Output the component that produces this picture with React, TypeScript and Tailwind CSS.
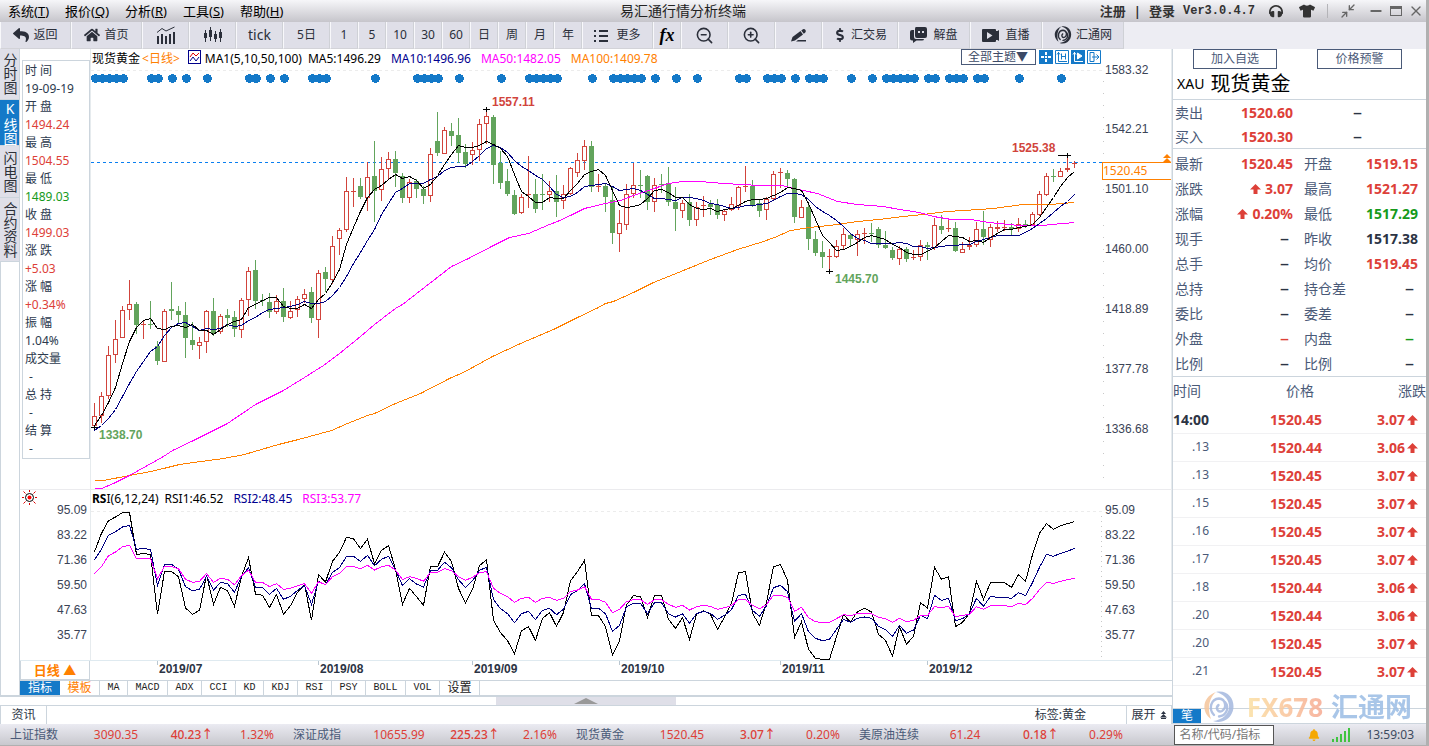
/**
 * Market terminal main window: daily candles with moving averages, the RSI
 * pane under them, and the quote / tick panel on the right.
 */

import type { ReactNode } from "react";
import { clsx } from "clsx";
import {
  FaReply,
  FaHome,
  FaDollarSign,
  FaHeadphones,
  FaTshirt,
  FaBell,
} from "react-icons/fa";
import { ZoomIn, ZoomOut, Minimize2, Minus, X } from "lucide-react";

// [direction, high, body top, body bottom, low]; 1 = rising, 0 = falling.
// Vertical values are pixels below the base line of the price pane.
type Candle = [number, number, number, number, number];

const STEP = 7;
const FIRST_X = 3;
const PRICE_TOP = 20;

const candles: Candle[] = [
  [1, 313, 326, 335, 338], [1, 302, 306, 325, 332], [1, 256, 265, 305, 308], [1, 230, 249, 264, 272],
  [1, 216, 220, 247, 247], [1, 190, 214, 219, 229], [0, 212, 214, 235, 243], [1, 231, 234, 235, 248],
  [0, 211, 234, 235, 238], [0, 251, 256, 271, 274], [1, 219, 221, 271, 271], [0, 192, 219, 221, 229],
  [0, 216, 221, 225, 232], [0, 212, 225, 248, 267], [0, 232, 250, 255, 259], [1, 247, 252, 255, 268],
  [1, 220, 221, 251, 262], [0, 208, 221, 243, 245], [1, 224, 226, 241, 243], [0, 219, 225, 228, 236],
  [0, 221, 227, 239, 246], [1, 208, 210, 239, 247], [1, 177, 181, 209, 225], [0, 170, 180, 211, 218],
  [0, 204, 210, 211, 215], [0, 203, 212, 222, 227], [1, 205, 211, 221, 223], [0, 198, 211, 227, 231],
  [1, 211, 221, 227, 228], [1, 206, 209, 219, 226], [1, 199, 204, 208, 212], [0, 197, 202, 228, 232],
  [1, 180, 183, 229, 247], [0, 177, 182, 189, 201], [1, 146, 156, 189, 193], [1, 138, 140, 148, 164],
  [1, 87, 101, 139, 141], [1, 88, 101, 101, 116], [0, 88, 96, 107, 108], [1, 72, 87, 107, 120],
  [0, 51, 86, 101, 131], [1, 67, 79, 99, 110], [1, 62, 69, 78, 89], [0, 61, 69, 83, 96],
  [0, 83, 86, 108, 112], [1, 89, 92, 107, 112], [0, 89, 91, 99, 107], [0, 96, 99, 106, 113],
  [1, 58, 64, 105, 111], [0, 22, 51, 63, 65], [1, 37, 40, 63, 63], [0, 33, 41, 46, 55],
  [0, 28, 45, 63, 72], [0, 54, 62, 74, 77], [1, 52, 60, 64, 74], [1, 29, 34, 59, 70],
  [1, 19, 26, 33, 53], [0, 25, 27, 75, 93], [0, 61, 73, 93, 98], [0, 79, 91, 104, 105],
  [0, 100, 105, 124, 124], [1, 104, 107, 122, 123], [1, 66, 104, 105, 117], [0, 89, 104, 119, 122],
  [0, 84, 104, 105, 119], [1, 91, 101, 104, 111], [0, 85, 101, 112, 126], [1, 95, 104, 110, 118],
  [1, 77, 78, 103, 104], [1, 63, 70, 82, 86], [1, 50, 56, 70, 79], [0, 51, 56, 97, 101],
  [1, 84, 96, 96, 101], [0, 93, 96, 107, 121], [0, 96, 110, 143, 153], [1, 120, 133, 143, 161],
  [1, 94, 104, 134, 139], [1, 73, 95, 103, 107], [0, 80, 95, 96, 107], [0, 85, 86, 112, 119],
  [1, 88, 95, 111, 121], [0, 84, 94, 95, 102], [0, 77, 93, 112, 115], [0, 97, 112, 119, 140],
  [1, 110, 113, 120, 127], [0, 104, 112, 130, 135], [1, 112, 117, 129, 135], [1, 106, 115, 116, 126],
  [0, 110, 114, 117, 124], [0, 109, 115, 125, 128], [1, 119, 121, 124, 130], [1, 107, 114, 119, 120],
  [1, 96, 97, 115, 119], [1, 76, 96, 97, 101], [0, 90, 96, 115, 116], [0, 109, 113, 121, 126],
  [1, 107, 109, 119, 129], [1, 81, 84, 108, 110], [1, 78, 82, 83, 97], [0, 80, 83, 89, 95],
  [0, 88, 89, 127, 132], [1, 110, 117, 127, 127], [0, 113, 117, 149, 159], [0, 141, 149, 163, 165],
  [0, 151, 162, 167, 177], [1, 159, 166, 167, 181], [1, 150, 156, 166, 167], [1, 138, 144, 155, 158],
  [0, 143, 145, 149, 156], [1, 140, 144, 149, 165], [1, 138, 143, 143, 153], [0, 133, 143, 144, 151],
  [0, 137, 139, 155, 157], [0, 141, 155, 158, 158], [0, 157, 160, 168, 169], [1, 156, 159, 168, 174],
  [0, 157, 159, 169, 171], [1, 160, 167, 168, 169], [1, 150, 155, 166, 170], [0, 152, 155, 157, 169],
  [1, 128, 135, 157, 159], [0, 125, 136, 140, 143], [1, 130, 138, 139, 141], [0, 132, 138, 161, 161],
  [1, 152, 159, 162, 162], [1, 147, 155, 157, 159], [1, 132, 139, 154, 156], [0, 121, 139, 147, 154],
  [1, 134, 137, 149, 156], [1, 131, 137, 139, 141], [1, 130, 137, 138, 140], [0, 133, 137, 139, 144],
  [1, 128, 134, 138, 141], [0, 130, 134, 135, 137], [1, 122, 124, 134, 135], [1, 101, 104, 124, 125],
  [1, 83, 86, 104, 105], [0, 79, 86, 87, 91], [1, 78, 81, 86, 86], [1, 66, 78, 80, 81],
  [1, 71, 73, 74, 77],
];

// Averages need history from before the first bar, so their heads are given.
const ma5Head = [335, 325, 312, 297];
const ma10Head = [340, 335, 328, 319, 306, 293, 281, 271, 261];

const ma50: [number, number][] = [
  [3, 398], [10, 398], [22, 393], [38, 385], [56, 375], [72, 366], [81, 360], [102, 350], [136, 333],
  [164, 314], [192, 300], [213, 287], [232, 275], [248, 263], [269, 246], [283, 234], [304, 218],
  [311, 214], [329, 200], [360, 176], [377, 168], [402, 155], [418, 147], [437, 143], [458, 134],
  [466, 131], [479, 125], [493, 118], [514, 113], [529, 110], [542, 105], [554, 101], [577, 93],
  [591, 91], [608, 91], [633, 93], [668, 95], [691, 95], [702, 98], [712, 100], [726, 103], [746, 111],
  [766, 114], [792, 116], [808, 119], [828, 122], [842, 126], [860, 129], [880, 129], [897, 132],
  [908, 133], [927, 135], [952, 135], [960, 134], [972, 133], [983, 132],
];

const ma100: [number, number][] = [
  [3, 390], [12, 390], [38, 385], [59, 381], [72, 378], [88, 374], [102, 372], [132, 368], [153, 364],
  [187, 354], [207, 349], [240, 340], [256, 333], [276, 325], [283, 323], [304, 313], [329, 303],
  [360, 287], [372, 282], [401, 266], [429, 253], [462, 239], [486, 227], [507, 217], [514, 213],
  [522, 211], [542, 202], [562, 192], [582, 184], [619, 169], [646, 159], [659, 155], [672, 151],
  [683, 147], [699, 140], [718, 137], [738, 135], [746, 134], [766, 131], [787, 129], [812, 126],
  [832, 124], [856, 121], [872, 120], [902, 118], [931, 114], [959, 114], [983, 112],
];

// RSI samples, three units to the pixel.
const rsi1 = [
  215, 160, 122, 111, 98, 97, 223, 221, 223, 403, 274, 275, 290, 384, 403, 391, 285, 373, 322, 332,
  379, 289, 233, 342, 346, 382, 344, 403, 377, 337, 313, 421, 284, 306, 244, 217, 172, 176, 206, 178,
  251, 211, 197, 268, 373, 325, 350, 376, 260, 260, 217, 245, 325, 370, 328, 257, 239, 421, 458, 482,
  521, 452, 440, 481, 415, 398, 439, 398, 302, 275, 241, 407, 407, 440, 526, 482, 374, 347, 350, 412,
  347, 347, 418, 445, 413, 478, 403, 392, 403, 448, 412, 370, 278, 275, 400, 436, 367, 260, 254, 301,
  472, 425, 508, 535, 538, 538, 470, 404, 426, 395, 385, 396, 463, 481, 528, 440, 493, 469, 368, 384,
  262, 298, 290, 440, 427, 400, 304, 358, 308, 307, 308, 322, 284, 304, 224, 160, 131, 148, 137, 131,
  125,
];
const rsi2 = [
  239, 208, 166, 155, 141, 136, 208, 205, 209, 316, 253, 253, 268, 320, 332, 328, 289, 331, 307, 311,
  337, 289, 263, 322, 322, 343, 325, 358, 349, 331, 317, 373, 304, 314, 277, 263, 229, 229, 244, 226,
  257, 238, 229, 269, 317, 296, 312, 321, 271, 271, 247, 263, 299, 323, 302, 271, 262, 359, 386, 401,
  428, 401, 394, 419, 391, 385, 404, 388, 344, 331, 311, 385, 385, 401, 454, 436, 381, 370, 370, 401,
  368, 368, 401, 411, 401, 430, 401, 394, 400, 418, 406, 389, 346, 343, 391, 409, 377, 323, 316, 335,
  424, 401, 455, 475, 482, 478, 448, 418, 427, 415, 411, 415, 439, 449, 469, 436, 460, 450, 406, 416,
  346, 361, 355, 422, 416, 401, 355, 379, 349, 352, 352, 355, 338, 347, 308, 262, 223, 229, 220, 214,
  205,
];
const rsi3 = [
  281, 260, 227, 216, 200, 196, 236, 236, 236, 296, 259, 260, 266, 298, 307, 304, 281, 307, 295, 298,
  314, 287, 271, 307, 307, 320, 311, 328, 325, 317, 311, 340, 305, 314, 290, 280, 259, 260, 266, 256,
  270, 260, 256, 270, 299, 290, 295, 304, 277, 277, 266, 272, 290, 301, 292, 278, 275, 325, 340, 350,
  367, 355, 352, 367, 355, 352, 361, 355, 335, 330, 320, 358, 358, 367, 398, 388, 365, 359, 359, 373,
  359, 359, 373, 382, 376, 390, 380, 376, 379, 388, 383, 377, 359, 359, 376, 386, 374, 346, 346, 352,
  394, 382, 413, 425, 428, 427, 416, 404, 407, 401, 400, 401, 412, 416, 427, 415, 425, 421, 407, 406,
  380, 383, 379, 410, 406, 403, 380, 388, 377, 377, 377, 380, 370, 374, 355, 329, 307, 310, 304, 299,
  295,
];

// Bars that carry a news marker.
const newsBars = [
  0, 1, 2, 3, 4, 8, 9, 11, 13, 16, 22, 23, 25, 27, 31, 32, 33, 40, 46, 47, 48, 49, 52, 58, 62, 63, 64,
  65, 66, 71, 74, 75, 76, 77, 78, 80, 83, 86, 92, 93, 96, 97, 98, 100, 102, 103, 104, 108, 111, 113,
  114, 115, 116, 117, 119, 120, 122, 123, 124, 126, 127, 132, 138,
];

const menus = [
  ["系统", "T"],
  ["报价", "Q"],
  ["分析", "R"],
  ["工具", "S"],
  ["帮助", "H"],
];

const infoRows: [string, string][] = [
  ["时 间", ""],
  ["19-09-19", ""],
  ["开 盘", ""],
  ["1494.24", "text-[#dd4038]"],
  ["最 高", ""],
  ["1504.55", "text-[#dd4038]"],
  ["最 低", ""],
  ["1489.03", "text-[#169a1c]"],
  ["收 盘", ""],
  ["1499.03", "text-[#dd4038]"],
  ["涨 跌", ""],
  ["+5.03", "text-[#dd4038]"],
  ["涨 幅", ""],
  ["+0.34%", "text-[#dd4038]"],
  ["振 幅", ""],
  ["1.04%", ""],
  ["成交量", ""],
  ["-", "pl-1"],
  ["总 持", ""],
  ["-", "pl-1"],
  ["结 算", ""],
  ["-", "pl-1"],
];

const months: [string, string][] = [
  ["2019/07", "w-[161px]"],
  ["2019/08", "w-[154px]"],
  ["2019/09", "w-[147px]"],
  ["2019/10", "w-[161px]"],
  ["2019/11", "w-[147px]"],
  ["2019/12", "w-[147px]"],
];

const indicators: [string, string][] = [
  ["MA", "w-7"],
  ["MACD", "w-10"],
  ["ADX", "w-[34px]"],
  ["CCI", "w-[34px]"],
  ["KD", "w-7"],
  ["KDJ", "w-[34px]"],
  ["RSI", "w-[34px]"],
  ["PSY", "w-[34px]"],
  ["BOLL", "w-10"],
  ["VOL", "w-[34px]"],
  ["设置", "w-10"],
];

const RED = "text-[#dd4038]";
const GREEN = "text-[#169a1c]";

type Cell = [string, string, string];
const quotes: [Cell, Cell][] = [
  [["最新", "1520.45", RED], ["开盘", "1519.15", RED]],
  [["涨跌", "↑3.07", RED], ["最高", "1521.27", RED]],
  [["涨幅", "↑0.20%", RED], ["最低", "1517.29", GREEN]],
  [["现手", "–", ""], ["昨收", "1517.38", ""]],
  [["总手", "–", ""], ["均价", "1519.45", RED]],
  [["总持", "–", ""], ["持仓差", "–", ""]],
  [["委比", "–", ""], ["委差", "–", ""]],
  [["外盘", "–", RED], ["内盘", "–", GREEN]],
  [["比例", "–", ""], ["比例", "–", ""]],
];

const ticks: [string, string, string][] = [
  ["14:00", "1520.45", "3.07"],
  [".13", "1520.44", "3.06"],
  [".13", "1520.45", "3.07"],
  [".15", "1520.45", "3.07"],
  [".16", "1520.45", "3.07"],
  [".17", "1520.45", "3.07"],
  [".18", "1520.44", "3.06"],
  [".20", "1520.44", "3.06"],
  [".20", "1520.45", "3.07"],
  [".21", "1520.45", "3.07"],
];

const indexes = [
  ["上证指数", "3090.35", "40.23↑", "1.32%"],
  ["深证成指", "10655.99", "225.23↑", "2.16%"],
  ["现货黄金", "1520.45", "3.07↑", "0.20%"],
  ["美原油连续", "61.24", "0.18↑", "0.29%"],
];

const priceTicks = ["1583.32", "1542.21", "1501.10", "1460.00", "1418.89", "1377.78", "1336.68"];
const rsiTicks = ["95.09", "83.22", "71.36", "59.50", "47.63", "35.77"];

const barX = (i: number) => FIRST_X + i * STEP;

function average(period: number, head: number[]) {
  const closes = candles.map(([up, , top, bottom]) => (up ? top : bottom));
  return closes
    .map((_, i) => {
      const value =
        i < head.length
          ? head[i]
          : closes.slice(i - period + 1, i + 1).reduce((a, b) => a + b, 0) / period;
      return `${barX(i) + 0.5},${Math.round(value) + PRICE_TOP + 0.5}`;
    })
    .join(" ");
}

const toPoints = (points: [number, number][]) =>
  points.map(([x, y]) => `${x + 0.5},${y + PRICE_TOP + 0.5}`).join(" ");

const rsiPoints = (values: number[]) =>
  values.map((v, i) => `${barX(i) + 0.5},${v / 3 - 31}`).join(" ");

function Swirl({ className, accent = "currentColor" }: { className?: string; accent?: string }) {
  return (
    <svg viewBox="0 0 32 32" className={className} fill="currentColor" aria-hidden>
      <path d="M8 28C-2 21 -1 6 13 1C6 7 4 18 8 28z" fill={accent} />
      <path d="M13 1C26 -2 34 11 29 22C26 29 18 33 10 30C20 29 27 22 26 14C25 7 20 3 13 1z" />
      <path
        d="M11 24C5 18 8 8 16 7.500C23 8 24 17 19 20C15 22 12 17 15.500 14M22 11C27 17 23 25 16 25.500"
        fill="none"
        stroke="currentColor"
        strokeWidth="2.400"
        strokeLinecap="round"
      />
    </svg>
  );
}

function BarsIcon() {
  return (
    <svg width="20" height="18" viewBox="0 0 20 18" fill="none" stroke="currentColor" aria-hidden>
      <path d="M2 18V10M6 18V8M10 18V10M14 18V8M18 18V6" strokeWidth="2" />
      <path d="M1 6.500L6 2.500L10 5L18.500 1" />
    </svg>
  );
}

function CandlesIcon() {
  return (
    <svg width="20" height="16" viewBox="0 0 20 16" fill="currentColor" aria-hidden>
      <path d="M2 3h1v12H2zM1 6h3v5H1zM7 0h1v14H7zM6 3h3v7H6zM12 4h1v11h-1zM11 7h3v5h-3zM17 2h1v13h-1zM16 5h3v6h-3z" />
    </svg>
  );
}

function ListIcon() {
  return (
    <svg width="14" height="13" viewBox="0 0 14 13" fill="currentColor" aria-hidden>
      <path d="M0 1h2v2H0zM5 1h9v2H5zM0 6h2v2H0zM5 6h9v2H5zM0 11h2v2H0zM5 11h9v2H5z" />
    </svg>
  );
}

function PenIcon() {
  return (
    <svg width="17" height="15" viewBox="0 0 17 15" fill="currentColor" aria-hidden>
      <path d="M1 13.500L2.500 9L10.500 3L13 6.500L5 12.500zM11.300 2.500L13 1.200Q14.500 .5 15.500 2Q16.300 3.300 15.300 4.500L13.800 5.800zM8 12h8v1.500H6z" />
    </svg>
  );
}

function ChatIcon() {
  return (
    <svg width="17" height="16" viewBox="0 0 17 16" fill="currentColor" aria-hidden>
      <path fillRule="evenodd" d="M6 0h9q2 0 2 2v7q0 2-2 2h-8q-2 0-2-2V2q0-2 1-2zM8 4v2h2V4zM12 4v2h2V4z" />
      <path d="M4 3v7q0 2 2 2h8q0 1.500-2 1.500H6.500L3 16v-2.500H2q-2 0-2-2V5q0-2 2-2z" />
    </svg>
  );
}

function VideoIcon() {
  return (
    <svg width="17" height="13" viewBox="0 0 17 13" fill="currentColor" aria-hidden>
      <path fillRule="evenodd" d="M1 0h12q1 0 1 1v1h1.500l1.500-1v11l-1.500-1H14v1q0 1-1 1H1q-1 0-1-1V1q0-1 1-1zM5 3v7l5.500-3.500z" />
    </svg>
  );
}

function ArrowUp({ className }: { className?: string }) {
  return (
    <svg width="11" height="10" viewBox="0 0 11 10" className={clsx("inline", className)} fill="currentColor" aria-hidden>
      <path d="M5.500 0L11 5.500H7.500V10H3.500V5.500H0z" />
    </svg>
  );
}

function ToolButton({ width, label, children }: { width: string; label?: string; children: ReactNode }) {
  return (
    <button
      type="button"
      aria-label={label}
      className={clsx(
        "flex shrink-0 items-center justify-center gap-1 border-b border-l border-r border-b-[#d3d3d8] border-l-[#f8f8fb] border-r-[#cfd1d6] bg-[#dfdfe8] text-xs",
        width,
      )}
    >
      {children}
    </button>
  );
}

function TitleBar() {
  return (
    <header className="grid h-[22px] grid-cols-3 items-center bg-linear-to-b from-[#f6f6f9] to-[#c6c5cb] text-black">
      <nav className="flex gap-4 pl-2 text-[13px]">
        {menus.map(([name, key]) => (
          <button key={key} type="button" className="leading-4 whitespace-nowrap">
            {name}(<u>{key}</u>)
          </button>
        ))}
      </nav>
      <h1 className="pr-15 text-center text-sm leading-5 text-[#222]">易汇通行情分析终端</h1>
      <div className="flex items-center justify-end pr-0.5 text-[#333]">
        <div className="flex items-center gap-2 text-[13px] leading-5 font-bold whitespace-nowrap">
          <a href="#register">注册</a>
          <span>|</span>
          <a href="#login">登录</a>
          <span className="font-['Liberation_Mono',monospace] text-xs">Ver3.0.4.7</span>
        </div>
        <FaHeadphones className="ml-3.5 size-3.5" />
        <FaTshirt className="ml-4 size-4" />
        <span className="ml-3 h-3.5 w-px bg-[#b4b4b8]" />
        <div className="ml-3 flex items-center gap-1.5 text-[#666]">
          <button type="button" aria-label="收起"><Minimize2 className="size-4" strokeWidth={2} /></button>
          <button type="button" aria-label="最小化" className="ml-1.5"><Minus className="size-4" strokeWidth={3} /></button>
          <button type="button" aria-label="最大化" className="h-2.5 w-3 border border-t-3 border-[#666]" />
          <button type="button" aria-label="关闭"><X className="size-4" strokeWidth={2} /></button>
        </div>
      </div>
    </header>
  );
}

function Toolbar() {
  return (
    <div className="flex h-[27px] bg-[#ededf3] text-[#2b2f3a]">
      <ToolButton width="w-[71px]"><FaReply className="size-4" />返回</ToolButton>
      <ToolButton width="w-[71px]"><FaHome className="size-4" />首页</ToolButton>
      <ToolButton width="w-[47px]" label="分时走势"><BarsIcon /></ToolButton>
      <ToolButton width="w-[47px]" label="K线走势"><CandlesIcon /></ToolButton>
      <ToolButton width="w-[47px]"><span className="text-sm">tick</span></ToolButton>
      <ToolButton width="w-[47px]">5日</ToolButton>
      {["1", "5", "10", "30", "60", "日", "周", "月", "年"].map((period) => (
        <ToolButton key={period} width="w-7">{period}</ToolButton>
      ))}
      <ToolButton width="w-[71px]"><ListIcon /><span className="pl-1">更多</span></ToolButton>
      <ToolButton width="w-7"><i className="font-['Liberation_Serif',serif] text-lg leading-5 font-bold text-black">fx</i></ToolButton>
      <ToolButton width="w-[47px]" label="缩小"><ZoomOut className="size-[19px]" strokeWidth={2} /></ToolButton>
      <ToolButton width="w-[47px]" label="放大"><ZoomIn className="size-[19px]" strokeWidth={2} /></ToolButton>
      <ToolButton width="w-[47px]" label="画线"><PenIcon /></ToolButton>
      <ToolButton width="w-[76px]"><FaDollarSign className="size-3.5" />汇交易</ToolButton>
      <ToolButton width="w-[72px]"><ChatIcon /><span className="pl-0.5">解盘</span></ToolButton>
      <ToolButton width="w-[72px]"><VideoIcon /><span className="pl-0.5">直播</span></ToolButton>
      <ToolButton width="w-[82px]"><Swirl className="size-[18px]" />汇通网</ToolButton>
    </div>
  );
}

function SideTabs() {
  const tabs: [string, string][] = [
    ["分时图", "h-[51px]"],
    ["K线图", "h-[46px]"],
    ["闪电图", "h-[52px]"],
    ["合约资料", "h-16"],
  ];
  return (
    <div className="flex w-5 shrink-0 flex-col border-b-2 border-[#ccd5dd]">
      {tabs.map(([name, height]) => (
        <button
          key={name}
          type="button"
          className={clsx(
            "flex items-center justify-center border-r border-b border-[#ccd5dd] text-sm leading-[18px] whitespace-nowrap [text-orientation:upright] [writing-mode:vertical-rl]",
            height,
            name === "K线图" ? "bg-[#1479c8] text-white" : "bg-[#dfdfe8] text-[#2c3038]",
          )}
        >
          {name}
        </button>
      ))}
      <div className="flex-1 border-r border-l border-[#ccd5dd]" />
    </div>
  );
}

function InfoPanel() {
  return (
    <div className="w-[70px] shrink-0 pt-[11px] pl-0.5">
      <div className="border border-[#ccd5dd] pt-px pl-0.5 text-xs leading-[18px] whitespace-nowrap text-[#2c3a4e]">
        {infoRows.map(([text, tone], i) => (
          <p key={i} className={tone}>{text}</p>
        ))}
      </div>
    </div>
  );
}

function Marker({ x, y }: { x: number; y: number }) {
  return <path d={`M${x - 3} ${y + 0.5}h7M${x + 0.5} ${y - 2}v5`} stroke="#000" />;
}

function PriceChart() {
  return (
    <svg className="block h-[419px] w-full" shapeRendering="crispEdges" role="img" aria-label="现货黄金日线">
      <line x1="0" x2="100%" y1="0.500" y2="0.500" stroke="#ececec" strokeDasharray="3 3" />
      {newsBars.map((i) => (
        <circle key={i} cx={barX(i) + 1.5} cy="8.500" r="4.500" fill="#1479c8" />
      ))}
      <line x1="0" x2="100%" y1="92.500" y2="92.500" stroke="#0a7ff0" strokeDasharray="3 3" />
      {candles.map(([up, high, top, bottom, low], i) => {
        const color = up ? "#d1443c" : "#62a45c";
        const hollow = up && bottom - top > 2;
        const x = barX(i);
        return (
          <g key={i}>
            <rect x={x} y={high + PRICE_TOP} width="1" height={low - high + 1} fill={color} />
            {hollow ? (
              <rect x={x - 1.5} y={top + PRICE_TOP + 0.5} width="4" height={bottom - top} fill="#fff" stroke={color} />
            ) : (
              <rect x={x - 2} y={top + PRICE_TOP} width="5" height={Math.max(1, bottom - top)} fill={color} />
            )}
          </g>
        );
      })}
      <g fill="none" strokeWidth="1">
        <polyline points={toPoints(ma100)} stroke="#ff8000" />
        <polyline points={toPoints(ma50)} stroke="#ff00ff" />
        <polyline points={average(10, ma10Head)} stroke="#000080" />
        <polyline points={average(5, ma5Head)} stroke="#000" />
      </g>
      <Marker x={barX(0)} y={357} />
      <Marker x={barX(56)} y={39} />
      <Marker x={barX(105)} y={201} />
      <Marker x={barX(139)} y={85} />
      <line x1="967" x2="978" y1="85.500" y2="85.500" stroke="#000" />
      <g className="font-['Liberation_Sans',sans-serif] text-xs font-bold">
        <text x="401" y="36" fill="#d1443c">1557.11</text>
        <text x="921" y="82" fill="#d1443c">1525.38</text>
        <text x="8" y="369" fill="#62a45c">1338.70</text>
        <text x="744" y="213" fill="#62a45c">1445.70</text>
      </g>
    </svg>
  );
}

function ChartHeader() {
  return (
    <div className="flex h-[21px] items-start text-xs leading-5 whitespace-nowrap">
      <span className="pl-px text-black">现货黄金</span>
      <span className="pl-0.5 text-[#ff8000]">&lt;日线&gt;</span>
      <svg width="13" height="14" viewBox="0 0 13 14" className="mt-px ml-2" fill="none" aria-hidden>
        <rect x="0.500" y="0.500" width="12" height="13" stroke="#00008b" />
        <path d="M2 7L5 3L8 6L11 3" stroke="#e00000" />
        <path d="M2 11L5 7L8 11L11 7" stroke="#00008b" />
      </svg>
      <span className="pl-1 text-black">MA1(5,10,50,100)</span>
      <span className="pl-1.5 text-black">MA5:1496.29</span>
      <span className="pl-2.5 text-[#000090]">MA10:1496.96</span>
      <span className="pl-2.5 text-[#ff00ff]">MA50:1482.05</span>
      <span className="pl-2.5 text-[#ff8000]">MA100:1409.78</span>
      <div className="ml-auto flex gap-0.5 pr-px">
        <select
          aria-label="主题"
          className="mr-px h-4 w-[75px] appearance-none border border-[#4a5a78] bg-white pl-1.5 text-xs leading-3 text-[#3c4a66]"
        >
          <option>全部主题▼</option>
        </select>
        <button type="button" aria-label="十字光标" className="mt-px size-3.5 bg-[#1479c8]">
          <svg viewBox="0 0 14 14" fill="none" stroke="#fff" strokeWidth="2" aria-hidden>
            <path d="M7 2v3M7 9v3M2 7h3M9 7h3M6 7h2" />
          </svg>
        </button>
        <button type="button" aria-label="区间统计" className="mt-px size-3.5">
          <svg viewBox="0 0 14 14" fill="none" stroke="#1479c8" aria-hidden>
            <path d="M.5.5h13v13H.5zM3.500 2v9.500H12M6.500 3.500v6M10.500 3.500v6M6.500 6.500h4M2 4.500l1.500-2l1.500 2" />
          </svg>
        </button>
        <button type="button" aria-label="播放" className="mt-px size-3.5 bg-[#1479c8]">
          <svg viewBox="0 0 14 14" fill="none" stroke="#fff" aria-hidden>
            <path d="M3.500 2v9.500H12M2 4.500l1.500-2l1.500 2" />
            <path d="M6.500 3v6l4.500-3z" fill="#fff" />
          </svg>
        </button>
        <button type="button" aria-label="移出" className="mt-px size-3.5">
          <svg viewBox="0 0 14 14" fill="none" stroke="#1479c8" aria-hidden>
            <path d="M.5.5h13v13H.5zM3 2.500h4v9H3zM5 7h7M9.500 4.500L12 7L9.500 9.500" />
          </svg>
        </button>
      </div>
    </div>
  );
}

function PriceAxis() {
  return (
    <div className="relative w-[70px] shrink-0 border-r border-[#e6ebee]">
      <svg className="absolute inset-0 h-full w-3" shapeRendering="crispEdges" aria-hidden>
        <line x1="1.500" x2="1.500" y1="32" y2="100%" stroke="#c8c8c8" strokeDasharray="1 11" />
      </svg>
      <div className="flex flex-col pl-[3px] font-['Liberation_Sans',sans-serif] text-xs text-[#3a4356]">
        <span className="h-[50px] pt-3.5 leading-[14px]">{priceTicks[0]}</span>
        {priceTicks.slice(1).map((tick) => (
          <span key={tick} className="flex h-15 items-center">{tick}</span>
        ))}
      </div>
      {/* Last price tag, hanging from the dashed price line */}
      <div className="absolute top-[113px] left-0 flex h-[18px] w-full items-center border border-r-0 border-[#ff8000] bg-white text-xs leading-4 text-[#ff8000]">
        1520.45
      </div>
      <svg width="8" height="8" viewBox="0 0 8 8" className="absolute top-[105px] right-0" fill="#ff8000" aria-hidden>
        <path d="M4 0L8 4H0zM4 4L8 8H0z" />
      </svg>
    </div>
  );
}

function RsiPane() {
  const axis = (side: string) => (
    <div
      className={clsx(
        "flex shrink-0 flex-col pt-2 font-['Liberation_Sans',sans-serif] text-xs leading-[25px] text-[#3a4356]",
        side,
      )}
    >
      {rsiTicks.map((tick) => (
        <span key={tick}>{tick}</span>
      ))}
    </div>
  );
  return (
    <div className="flex h-[170px]">
      <div className="relative w-[70px] shrink-0">
        <svg width="15" height="15" viewBox="0 0 15 15" className="absolute top-0 left-0.5" fill="none" stroke="#e00000" aria-hidden>
          <path d="M7.500 0v2M7.500 13v2M0 7.500h2M13 7.500h2M1.500 1.500l2 2M11.500 11.500l2 2M1.500 13.500l2-2M11.500 3.500l2-2" />
          <circle cx="7.500" cy="7.500" r="4" stroke="#000" />
          <circle cx="7.500" cy="7.500" r="2" fill="#f00" stroke="none" />
        </svg>
        {axis("pr-[3px] text-right")}
      </div>
      <div className="min-w-0 flex-1 border-l border-[#e6ebee]">
        <div className="flex h-[21px] items-start text-xs leading-[18px] text-black">
          <span className="pl-px"><b>RS</b>I(6,12,24)</span>
          <span className="pl-1.5">RSI1:46.52</span>
          <span className="pl-2.5 text-[#000090]">RSI2:48.45</span>
          <span className="pl-2.5 text-[#ff00ff]">RSI3:53.77</span>
        </div>
        <svg className="block h-[149px] w-full" shapeRendering="crispEdges" fill="none" role="img" aria-label="RSI">
          <line x1="0" x2="100%" y1="0.500" y2="0.500" stroke="#ececec" strokeDasharray="3 3" />
          <polyline points={rsiPoints(rsi1)} stroke="#000" />
          <polyline points={rsiPoints(rsi2)} stroke="#000080" />
          <polyline points={rsiPoints(rsi3)} stroke="#ff00ff" />
          <line x1="100%" x2="100%" y1="5" y2="146" stroke="#c8c8c8" strokeWidth="2" strokeDasharray="1 4" />
        </svg>
      </div>
      {axis("w-[70px] border-r border-[#e6ebee] pl-[3px]")}
    </div>
  );
}

function Workspace() {
  return (
    <div className="flex min-w-0 flex-1 flex-col">
      <div className="flex border-b border-[#ebebee]">
        <InfoPanel />
        <div className="min-w-0 flex-1 border-l border-[#e6ebee]">
          <ChartHeader />
          <PriceChart />
        </div>
        <PriceAxis />
      </div>
      <RsiPane />
      <div className="flex h-5 border-t border-[#dfeaf0]">
        <button type="button" className="w-[70px] border border-t-0 border-[#ccd5dd] text-[13px] leading-4 font-bold text-[#ff8000]">
          日线 ▲
        </button>
        <div className="flex min-w-0 flex-1 overflow-hidden pl-[67px] font-['Liberation_Sans',sans-serif] text-xs leading-4 font-bold text-[#2c3444]">
          {months.map(([month, width]) => (
            <div key={month} className={clsx("flex shrink-0", width)}>
              <span className="h-1 w-0.5 border-l border-[#b9c6d0]" />
              {month}
            </div>
          ))}
        </div>
      </div>
      <div className="flex h-[17px] border-t border-b-2 border-[#ccd5dd] text-xs leading-[14px]">
        <button type="button" className="w-10 bg-[#1479c8] text-white">指标</button>
        <button type="button" className="w-10 border-r border-[#ccd5dd] text-[#ff8000]">模板</button>
        {indicators.map(([name, width]) => (
          <button
            key={name}
            type="button"
            className={clsx(
              "border-r border-[#ccd5dd] text-center font-['Liberation_Mono','Noto_Sans_CJK_SC',monospace] text-[#222]",
              name === "设置" ? "text-xs" : "text-[10px]",
              width,
            )}
          >
            {name}
          </button>
        ))}
      </div>
    </div>
  );
}

function Value({ text, tone }: { text: string; tone: string }) {
  if (text === "–") {
    return <span className={clsx("pr-1 text-lg leading-5", tone)}>–</span>;
  }
  const rising = text.startsWith("↑");
  return (
    <span className={clsx("text-sm leading-5 font-bold", tone)}>
      {rising && <ArrowUp className="mr-1 align-baseline" />}
      {rising ? text.slice(1) : text}
    </span>
  );
}

function QuotePanel() {
  return (
    <aside className="flex w-[254px] shrink-0 flex-col border-l border-[#ccd5dd] text-[#2c3444]">
      <div className="flex gap-10 pl-5">
        <button type="button" className="h-5 w-[84px] border border-[#4a5a78] text-xs leading-4 text-[#4a5a78]">加入自选</button>
        <button type="button" className="h-5 w-[85px] border border-[#4a5a78] text-xs leading-4 text-[#4a5a78]">价格预警</button>
      </div>
      <h2 className="flex h-[31px] items-center gap-1.5 border-b border-[#ccd5dd] pl-1 text-black">
        <span className="text-sm">XAU</span>
        <span className="text-xl leading-7">现货黄金</span>
      </h2>
      <table className="w-full table-fixed border-b border-[#ccd5dd] text-sm leading-5">
        <tbody>
          {[["卖出", "1520.60"], ["买入", "1520.30"]].map(([name, price]) => (
            <tr key={name} className="h-6">
              <th scope="row" className="w-[50px] pt-0.5 pl-0.5 text-left font-normal text-[#4a5a78]">{name}</th>
              <td className="w-[70px] pt-0.5 text-right"><Value text={price} tone={RED} /></td>
              <td className="pt-0.5 pr-15 text-right"><Value text="–" tone="" /></td>
            </tr>
          ))}
        </tbody>
      </table>
      <div className="border-b border-[#ccd5dd] pt-0.5">
        <table className="w-full table-fixed text-sm leading-5">
          <tbody>
            {quotes.map(([left, right], i) => (
              <tr key={i} className="h-[25px]">
                <th scope="row" className="w-[50px] pl-0.5 text-left font-normal text-[#4a5a78]">{left[0]}</th>
                <td className="w-[70px] text-right whitespace-nowrap"><Value text={left[1]} tone={left[2]} /></td>
                <th scope="row" className="w-[60px] pl-[11px] text-left font-normal whitespace-nowrap text-[#4a5a78]">{right[0]}</th>
                <td className="pr-2 text-right"><Value text={right[1]} tone={right[2]} /></td>
              </tr>
            ))}
          </tbody>
        </table>
      </div>
      <table className="w-full table-fixed text-sm leading-5">
        <thead>
          <tr className="h-7 text-[#4a5a78]">
            <th scope="col" className="w-[60px] text-left font-normal">时间</th>
            <th scope="col" className="w-[89px] pr-2 text-right font-normal">价格</th>
            <th scope="col" className="text-right font-normal">涨跌</th>
          </tr>
        </thead>
        <tbody>
          {ticks.map(([time, price, change], i) => (
            <tr key={i} className="h-7 border-b border-[#f1f1f3]">
              <td
                className={clsx(
                  "pr-6 text-right",
                  i === 0 ? "pt-0.5 font-bold" : "text-xs text-[#4a5a78]",
                )}
              >
                {time}
              </td>
              <td className={clsx("pt-0.5 text-right font-bold", RED)}>{price}</td>
              <td className={clsx("pt-0.5 pr-2 text-right font-bold", RED)}>
                {change}
                <ArrowUp className="ml-0.5 align-baseline" />
              </td>
            </tr>
          ))}
        </tbody>
      </table>
      <div className="relative mt-auto flex h-4 border-t border-b border-[#ccd5dd]">
        <button type="button" className="w-7 bg-[#1479c8] text-xs leading-[14px] text-white">笔</button>
        {/* Brand mark lies across the tab strip */}
        <div className="absolute right-3.5 bottom-0 flex h-8 items-center font-bold whitespace-nowrap opacity-90">
          <Swirl className="size-8 text-[#a9bce0]" accent="#f6c8a0" />
          <span className="ml-3 bg-linear-to-r from-[#fbe2a8] to-[#f7ae98] bg-clip-text text-[26px] leading-8 font-bold text-transparent">FX678</span>
          <span className="ml-2 text-[27px] leading-8 text-[#a0c0e6]">汇通网</span>
        </div>
      </div>
    </aside>
  );
}

function StatusBar() {
  return (
    <footer className="flex h-[22px] items-center border-b border-[#b0b0b0] bg-linear-to-b from-[#ebebf2] to-[#c8c8ce] pl-2.5 text-xs">
      {indexes.map(([name, price, change, percent]) => (
        <div key={name} className="grid w-[283px] shrink-0 grid-cols-[68px_76px_76px_54px] text-center whitespace-nowrap text-[#dd4038]">
          <span className="text-left text-[#4a5a78]">{name}</span>
          <span>{price}</span>
          <span className="font-medium">{change}</span>
          <span>{percent}</span>
        </div>
      ))}
      <div className="ml-auto flex items-center pr-3">
        <input
          aria-label="名称/代码/指标"
          placeholder="名称/代码/指标"
          className="h-5 w-[100px] border border-[#555] bg-white pl-1 text-xs text-[#333] placeholder:text-[#777]"
        />
        <FaBell className="ml-[34px] size-3 text-[#f5a800]" />
        <svg width="18" height="14" viewBox="0 0 18 14" className="ml-3 fill-[#3fc43f]" aria-hidden>
          <path d="M0 11h2v3H0zM4 9h2v5H4zM8 6h2v8H8zM12 3h2v11h-2zM16 0h2v14h-2z" />
        </svg>
        <time className="ml-4 text-[#3c4a5e]">13:59:03</time>
      </div>
    </footer>
  );
}

export default function App() {
  return (
    <div className="flex min-h-screen flex-col overflow-hidden border-r-3 border-[#b0b0b0] bg-white font-['Noto_Sans','Noto_Sans_CJK_SC',sans-serif]">
      <TitleBar />
      <Toolbar />
      <main className="flex flex-1">
        <div className="flex min-w-0 flex-1 flex-col">
          <div className="flex">
            <SideTabs />
            <Workspace />
          </div>
          <div className="flex h-[9px] justify-center border-b border-[#ccd5dd]">
            <button type="button" aria-label="展开资讯" className="flex w-[180px] justify-center bg-[#dfdfe8]">
              <svg width="24" height="6" viewBox="0 0 24 6" className="mt-px" fill="#999" aria-hidden>
                <path d="M12 0L24 6H0z" />
              </svg>
            </button>
          </div>
          <div className="flex h-[18px] text-xs leading-[18px] text-[#2c3444]">
            <button type="button" className="w-[47px] border-r border-l border-[#ccd5dd]">资讯</button>
            <span className="mr-10 ml-auto">标签:黄金</span>
            <button type="button" className="flex w-[46px] items-center justify-center gap-1 border-r border-l border-[#ccd5dd]">
              展开
              <svg width="7" height="8" viewBox="0 0 7 8" fill="currentColor" aria-hidden>
                <path d="M3.500 0L6 3H1zM3.500 3L7 6.500H0zM1 7h5v1H1z" />
              </svg>
            </button>
          </div>
        </div>
        <QuotePanel />
      </main>
      <StatusBar />
    </div>
  );
}
